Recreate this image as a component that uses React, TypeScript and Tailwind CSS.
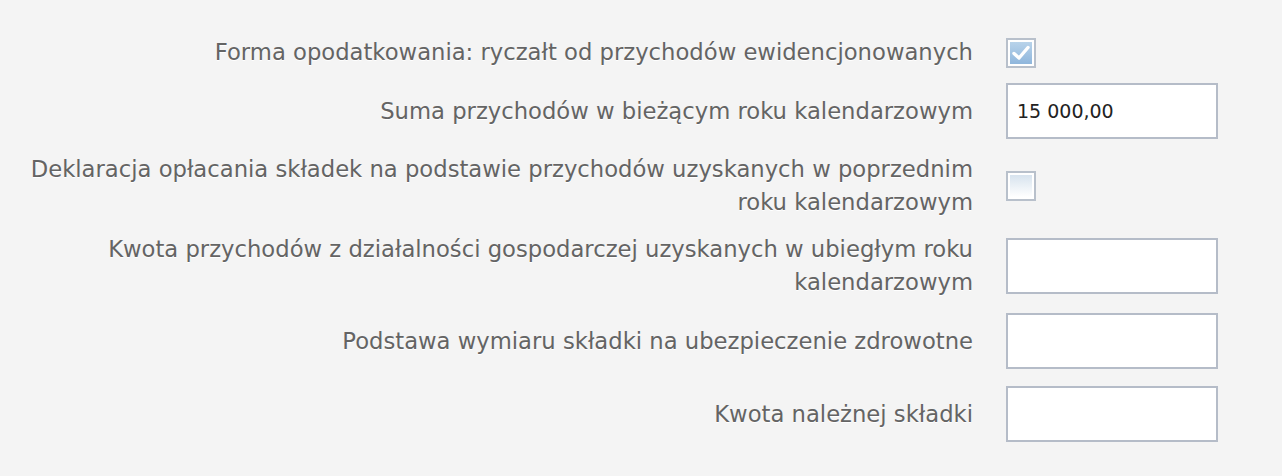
import React from 'react';

const labelClass =
  'w-[958px] shrink-0 text-right text-[#646464] text-[22.7px] leading-[33px] [text-shadow:0_1px_0_#ffffff]';

const inputClass =
  'w-[212px] h-[56px] border-2 border-[#b5bcc8] bg-white px-[9px] text-[19px] text-[#222] flex items-center';

const Checkbox: React.FC<{ checked?: boolean }> = ({ checked }) => (
  <div className="w-[30px] h-[30px] border-2 border-[#b8c0cb] bg-white p-[2px]">
    <div
      className={
        checked
          ? 'w-full h-full bg-gradient-to-b from-[#b8d3ea] to-[#8fb6dc] flex items-center justify-center'
          : 'w-full h-full bg-gradient-to-b from-[#d7e3ee] to-[#ffffff]'
      }
    >
      {checked && (
        <svg width="20" height="18" viewBox="0 0 20 18">
          <path d="M3 9.5 L8 14 L17 3.5" fill="none" stroke="#ffffff" strokeWidth="3.4" strokeLinecap="round" strokeLinejoin="round" />
        </svg>
      )}
    </div>
  </div>
);

const Row: React.FC<{ label: React.ReactNode; children: React.ReactNode; className?: string }> = ({
  label,
  children,
  className,
}) => (
  <div className={`flex items-center gap-[33px] ${className ?? ''}`}>
    <div className={labelClass}>{label}</div>
    <div className="shrink-0">{children}</div>
  </div>
);

export default function App() {
  return (
    <div
      className="w-[1282px] h-[476px] bg-[#f4f4f4] pt-[36px] pl-[15px] flex flex-col gap-[14px]"
      style={{ fontFamily: '"DejaVu Sans", Verdana, sans-serif' }}
    >
      <Row label="Forma opodatkowania: ryczałt od przychodów ewidencjonowanych">
        <Checkbox checked />
      </Row>
      <Row label="Suma przychodów w bieżącym roku kalendarzowym">
        <div className={inputClass}>15 000,00</div>
      </Row>
      <Row
        label={
          <>
            Deklaracja opłacania składek na podstawie przychodów uzyskanych w poprzednim
            <br />
            roku kalendarzowym
          </>
        }
      >
        <Checkbox />
      </Row>
      <Row
        label={
          <>
            Kwota przychodów z działalności gospodarczej uzyskanych w ubiegłym roku
            <br />
            kalendarzowym
          </>
        }
      >
        <div className={inputClass} />
      </Row>
      <Row label="Podstawa wymiaru składki na ubezpieczenie zdrowotne">
        <div className={inputClass} />
      </Row>
      <Row label="Kwota należnej składki" className="mt-[3px]">
        <div className={inputClass} />
      </Row>
    </div>
  );
}
